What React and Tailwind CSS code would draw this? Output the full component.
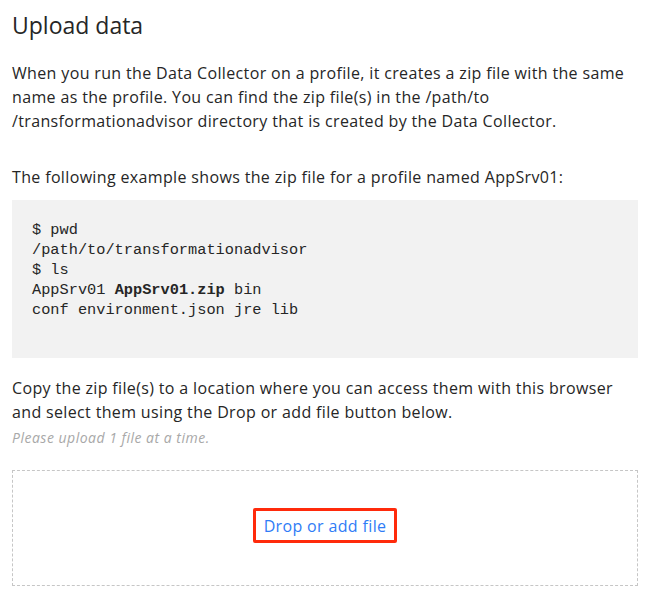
import React from 'react';

const codeLines = [
  ['$ pwd'],
  ['/path/to/transformationadvisor'],
  ['$ ls'],
  ['AppSrv01 ', 'AppSrv01.zip', ' bin'],
  ['conf environment.json jre lib'],
];

export default function App() {
  return (
    <div className="min-h-screen bg-white px-3 pt-[9px] text-[#262626]" style={{ fontFamily: '"Open Sans", "Noto Sans", sans-serif' }}>
      {/* Heading */}
      <h1 className="text-[23px] font-normal leading-[32px] mb-[20px]">Upload data</h1>

      <p className="text-[16px] leading-[24px] tracking-[0.35px] w-[626px] mb-[32px]">
        When you run the Data Collector on a profile, it creates a zip file with the same name as the profile. You can find
        the zip file(s) in the /path/to /transformationadvisor directory that is created by the Data Collector.
      </p>

      <p className="text-[16px] leading-[24px] tracking-[0.35px] mb-[11px]">
        The following example shows the zip file for a profile named AppSrv01:
      </p>

      {/* Code sample */}
      <div
        className="w-[626px] h-[158px] bg-[#f2f2f2] px-5 pt-[20px] mb-[18px] text-[15.3px] leading-[20px] whitespace-pre"
        style={{ fontFamily: '"Liberation Mono", "DejaVu Sans Mono", monospace' }}
      >
        {codeLines.map((line, i) => (
          <div key={i}>
            {line.length === 1 ? (
              line[0]
            ) : (
              <>
                {line[0]}
                <b className="font-bold">{line[1]}</b>
                {line[2]}
              </>
            )}
          </div>
        ))}
      </div>

      <p className="text-[16px] leading-[24px] tracking-[0.35px] w-[626px]">
        Copy the zip file(s) to a location where you can access them with this browser and select them using the Drop or
        add file button below.
      </p>
      <p className="text-[14px] leading-[18px] tracking-[0.5px] italic text-[#a8a8a8] mt-[5px]">Please upload 1 file at a time.</p>

      {/* Drop zone */}
      <div className="w-[626px] h-[116px] mt-[23px] pb-[5px] border border-dashed border-[#c6c6c6] flex items-center justify-center">
        <button className="border-[3px] border-[#ff2a0b] rounded-[2px] px-[8px] h-[35px] text-[16px] tracking-[0.35px] text-[#2f7cf6] bg-white">
          Drop or add file
        </button>
      </div>
    </div>
  );
}
